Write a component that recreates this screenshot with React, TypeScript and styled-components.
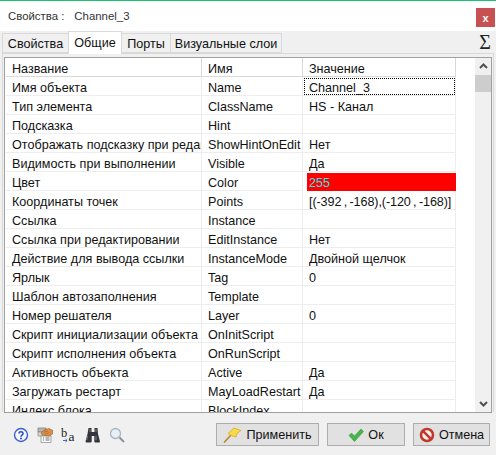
import React from "react";
import styled, { createGlobalStyle } from "styled-components";

const GlobalStyle = createGlobalStyle`
  html, body {
    margin: 0;
    padding: 0;
    background: #f0f0f0;
  }
  body {
    font-family: "Liberation Sans", Arial, sans-serif;
    font-size: 12.6px;
    color: #111;
  }
`;

const rows = [
  ["Имя объекта", "Name", "Channel_3"],
  ["Тип элемента", "ClassName", "HS - Канал"],
  ["Подсказка", "Hint", ""],
  ["Отображать подсказку при редактировании", "ShowHintOnEdit", "Нет"],
  ["Видимость при выполнении", "Visible", "Да"],
  ["Цвет", "Color", "255"],
  ["Координаты точек", "Points", "[(-392 , -168),(-120 , -168)]"],
  ["Ссылка", "Instance", ""],
  ["Ссылка при редактировании", "EditInstance", "Нет"],
  ["Действие для вывода ссылки", "InstanceMode", "Двойной щелчок"],
  ["Ярлык", "Tag", "0"],
  ["Шаблон автозаполнения", "Template", ""],
  ["Номер решателя", "Layer", "0"],
  ["Скрипт инициализации объекта", "OnInitScript", ""],
  ["Скрипт исполнения объекта", "OnRunScript", ""],
  ["Активность объекта", "Active", "Да"],
  ["Загружать рестарт", "MayLoadRestart", "Да"],
  ["Индекс блока", "BlockIndex", ""],
];

const tabs = [
  { label: "Свойства", width: 67 },
  { label: "Общие", width: 54 },
  { label: "Порты", width: 50 },
  { label: "Визуальные слои", width: 112 },
];

const Window = styled.div`
  width: 496px;
  height: 455px;
  display: flex;
  flex-direction: column;
  overflow: hidden;
  background: #f0f0f0;
  border-top: 1px solid #17c46f;
  box-sizing: border-box;
`;

const TitleBar = styled.div`
  height: 30px;
  flex: none;
  background: #fff;
  display: flex;
  justify-content: space-between;
  padding-left: 8px;
  color: #333;
`;

const TitleText = styled.div`
  display: flex;
  gap: 10px;
  padding-top: 8px;
  font-size: 11.4px;
  line-height: 15px;
`;

const CloseButton = styled.div`
  width: 19px;
  height: 19px;
  margin: 7px 1px 0 0;
  background: #c75050;
  color: #fff;
  font-size: 11px;
  font-weight: bold;
  display: flex;
  align-items: center;
  justify-content: center;
`;

const TabStrip = styled.div`
  height: 22px;
  flex: none;
  display: flex;
  align-items: flex-end;
  justify-content: space-between;
  padding: 0 5px 0 3px;
`;

const Tabs = styled.div`
  display: flex;
  align-items: flex-end;
`;

const Tab = styled.div<{ $active?: boolean; $w: number }>`
  width: ${({ $w }) => $w}px;
  height: ${({ $active }) => ($active ? "23px" : "20px")};
  box-sizing: border-box;
  text-align: center;
  padding-top: ${({ $active }) => ($active ? "4px" : "3px")};
  margin-bottom: ${({ $active }) => ($active ? "-1px" : "0")};
  background: ${({ $active }) => ($active ? "#fff" : "#f0f0f0")};
  border: 1px solid #d9d9d9;
  border-bottom: ${({ $active }) => ($active ? "none" : "1px solid #d9d9d9")};
  margin-left: -1px;
  position: relative;
  white-space: nowrap;
`;

const Sigma = styled.div`
  font-family: "Liberation Serif", serif;
  font-size: 20px;
  line-height: 22px;
  color: #222;
`;

const Panel = styled.div`
  height: 359px;
  flex: none;
  box-sizing: border-box;
  margin: 0 2px;
  padding: 3px 1px 0 1px;
  border: 1px solid #d9d9d9;
  border-bottom: none;
  background: #f0f0f0;
`;

const GridFrame = styled.div`
  height: 356px;
  box-sizing: border-box;
  display: flex;
  background: #fff;
  border: 1px solid #a0a0a0;
  overflow: hidden;
`;

const Table = styled.div`
  width: 451px;
  flex: none;
  padding-left: 1px;
  overflow: hidden;
`;

const Row = styled.div`
  display: grid;
  grid-template-columns: 196px 101px 153px;
  height: 19px;
`;

const Cell = styled.div<{ $head?: boolean }>`
  box-sizing: border-box;
  height: 19px;
  line-height: 22px;
  padding-left: 6px;
  overflow: hidden;
  white-space: nowrap;
  border-right: 1px solid ${({ $head }) => ($head ? "#d8d8d8" : "#ededed")};
  border-bottom: 1px solid ${({ $head }) => ($head ? "#d8d8d8" : "#ededed")};
`;

const FocusCell = styled(Cell)`
  outline: 1px dotted #000;
  outline-offset: -2px;
`;

const ColorCell = styled(Cell)`
  margin-left: 4px;
  padding-left: 2px;
  background: #ff0000;
  color: #27e6e6;
  border-right: none;
  border-bottom: none;
  margin-top: 1px;
  height: 18px;
  line-height: 20px;
`;

const PointsCell = styled(Cell)`
  word-spacing: -1px;
  letter-spacing: -0.1px;
`;

const Scrollbar = styled.div`
  width: 17px;
  flex: none;
  margin-left: 18px;
  background: #f0f0f0;
  display: flex;
  flex-direction: column;
  align-items: center;
`;

const ScrollArrow = styled.svg`
  width: 17px;
  height: 17px;
  flex: none;
`;

const ScrollThumb = styled.div`
  width: 17px;
  height: 17px;
  background: #cdcdcd;
`;

const ScrollSpace = styled.div`
  flex: 1;
`;

const Footer = styled.div`
  flex: 1;
  display: flex;
  align-items: flex-start;
  justify-content: space-between;
  padding: 11px 6px 0 13px;
`;

const ToolIcons = styled.div`
  display: flex;
  align-items: center;
  gap: 8px;
  height: 23px;
`;

const Buttons = styled.div`
  display: flex;
  gap: 8px;
`;

const Btn = styled.div<{ $w: number }>`
  width: ${({ $w }) => $w}px;
  height: 23px;
  box-sizing: border-box;
  border: 1px solid #adadad;
  background: #e1e1e1;
  display: flex;
  align-items: center;
  justify-content: center;
  gap: 4px;
`;

const Mini = styled.svg`
  width: 16px;
  height: 16px;
  flex: none;
`;

const FlagSvg = styled.svg`
  width: 19px;
  height: 16px;
  flex: none;
`;

const HelpIcon = () => (
  <Mini viewBox="0 0 16 16">
    <circle cx="8" cy="8" r="6.5" fill="#f4f6ff" stroke="#3a5fd0" strokeWidth="1.4" />
    <path d="M6 6.5c0-2.5 4-2.5 4 0 0 1.6-2 1.6-2 3.2" fill="none" stroke="#2a4cc0" strokeWidth="1.5" />
    <circle cx="8" cy="11.6" r="1" fill="#2a4cc0" />
  </Mini>
);

const HandTableIcon = () => (
  <Mini viewBox="0 0 16 16">
    <rect x="1" y="1" width="8" height="4" fill="#b8b8b8" stroke="#777" strokeWidth="0.7" />
    <rect x="1" y="5" width="8" height="4" fill="#d6d6d6" stroke="#888" strokeWidth="0.7" />
    <rect x="4" y="9" width="10" height="6.5" fill="#f8f8f8" stroke="#888" strokeWidth="0.7" />
    <path d="M6 11h1M6 13h1" stroke="#2c9a3c" strokeWidth="1" />
    <path d="M8.5 11h4M8.5 13h4" stroke="#777" strokeWidth="1" />
    <path d="M4 6l3-3 5-1.5 4 2-.5 3.5-3 2-4-.5-3-.5z" fill="#d98f45" stroke="#9a5c20" strokeWidth="0.6" />
    <path d="M7 5l4-1M8 7l4-1" stroke="#a5651f" strokeWidth="0.6" />
  </Mini>
);

const CaseIcon = () => (
  <Mini viewBox="0 0 16 16">
    <text x="0" y="10" fontFamily="Liberation Serif, serif" fontSize="12.5" fill="#222">b</text>
    <text x="7.5" y="14" fontFamily="Liberation Serif, serif" fontSize="13.5" fill="#222">a</text>
    <path d="M2 13.5h4M4.5 12l1.600 1.500-1.600 1.500" fill="none" stroke="#2f56c4" strokeWidth="0.9" />
  </Mini>
);

const BinocularsIcon = () => (
  <Mini viewBox="0 0 16 16">
    <path d="M3.500 1h3v4h3V1h3l.5 6 2 7.500-.5 1H10l-.7-1V9H6.700v5.500l-.7 1H1l-.5-1L2.500 7z" fill="#33363a" />
    <path d="M2.500 9l-.8 4M11 9v4" stroke="#7c8086" strokeWidth="1" />
    <rect x="4" y="2" width="2" height="3" fill="#55585c" />
    <rect x="10" y="2" width="2" height="3" fill="#55585c" />
  </Mini>
);

const SearchIcon = () => (
  <Mini viewBox="0 0 16 16">
    <circle cx="6.500" cy="6.500" r="5" fill="#e6eef8" stroke="#a9b3bd" strokeWidth="1.300" />
    <path d="M10.500 10.500L15 15" stroke="#8d9299" strokeWidth="2" />
  </Mini>
);

const FlagIcon = () => (
  <FlagSvg viewBox="0 0 19 16">
    <path d="M1 15.500L8 8" stroke="#b98a2a" strokeWidth="1.600" />
    <path d="M5 6.500L11 1l7 2.500-4 3-1 3.500-5-1.500z" fill="#f8d94a" stroke="#d8a92a" strokeWidth="0.800" />
  </FlagSvg>
);

const CheckIcon = () => (
  <Mini viewBox="0 0 16 16">
    <path d="M1 8.500l2.500-2.500 3 3L13 2l2.500 2.500-9 10z" fill="#46b54a" stroke="#2f9a3a" strokeWidth="0.600" />
  </Mini>
);

const CancelIcon = () => (
  <Mini viewBox="0 0 16 16">
    <circle cx="8" cy="8" r="6" fill="#f4f0f0" stroke="#c0392b" strokeWidth="2.600" />
    <path d="M3.800 3.800l8.400 8.400" stroke="#c0392b" strokeWidth="2.600" />
  </Mini>
);

const renderValue = (name: string, value: string) => {
  if (name === "Name") return <FocusCell>{value}</FocusCell>;
  if (name === "Color") return <ColorCell>{value}</ColorCell>;
  if (name === "Points") return <PointsCell>{value}</PointsCell>;
  return <Cell>{value}</Cell>;
};

const App = () => (
  <>
    <GlobalStyle />
    <Window>
      <TitleBar>
        <TitleText>
          <span>Свойства :</span>
          <span>Channel_3</span>
        </TitleText>
        <CloseButton>x</CloseButton>
      </TitleBar>
      <TabStrip>
        <Tabs>
          {tabs.map((t, i) => (
            <Tab key={t.label} $w={t.width} $active={i === 1}>{t.label}</Tab>
          ))}
        </Tabs>
        <Sigma>Σ</Sigma>
      </TabStrip>
      <Panel>
        <GridFrame>
          <Table>
            <Row>
              <Cell $head>Название</Cell>
              <Cell $head>Имя</Cell>
              <Cell $head>Значение</Cell>
            </Row>
            {rows.map(([a, b, c]) => (
              <Row key={b}>
                <Cell>{a}</Cell>
                <Cell>{b}</Cell>
                {renderValue(b, c)}
              </Row>
            ))}
          </Table>
          <Scrollbar>
            <ScrollArrow viewBox="0 0 17 17">
              <path d="M5 10l3.500-3.500L12 10" fill="none" stroke="#505050" strokeWidth="2" />
            </ScrollArrow>
            <ScrollThumb />
            <ScrollSpace />
            <ScrollArrow viewBox="0 0 17 17">
              <path d="M5 7l3.500 3.500L12 7" fill="none" stroke="#505050" strokeWidth="2" />
            </ScrollArrow>
          </Scrollbar>
        </GridFrame>
      </Panel>
      <Footer>
        <ToolIcons>
          <HelpIcon />
          <HandTableIcon />
          <CaseIcon />
          <BinocularsIcon />
          <SearchIcon />
        </ToolIcons>
        <Buttons>
          <Btn $w={103}><FlagIcon />Применить</Btn>
          <Btn $w={78}><CheckIcon />Ок</Btn>
          <Btn $w={77}><CancelIcon />Отмена</Btn>
        </Buttons>
      </Footer>
    </Window>
  </>
);

export default App;
